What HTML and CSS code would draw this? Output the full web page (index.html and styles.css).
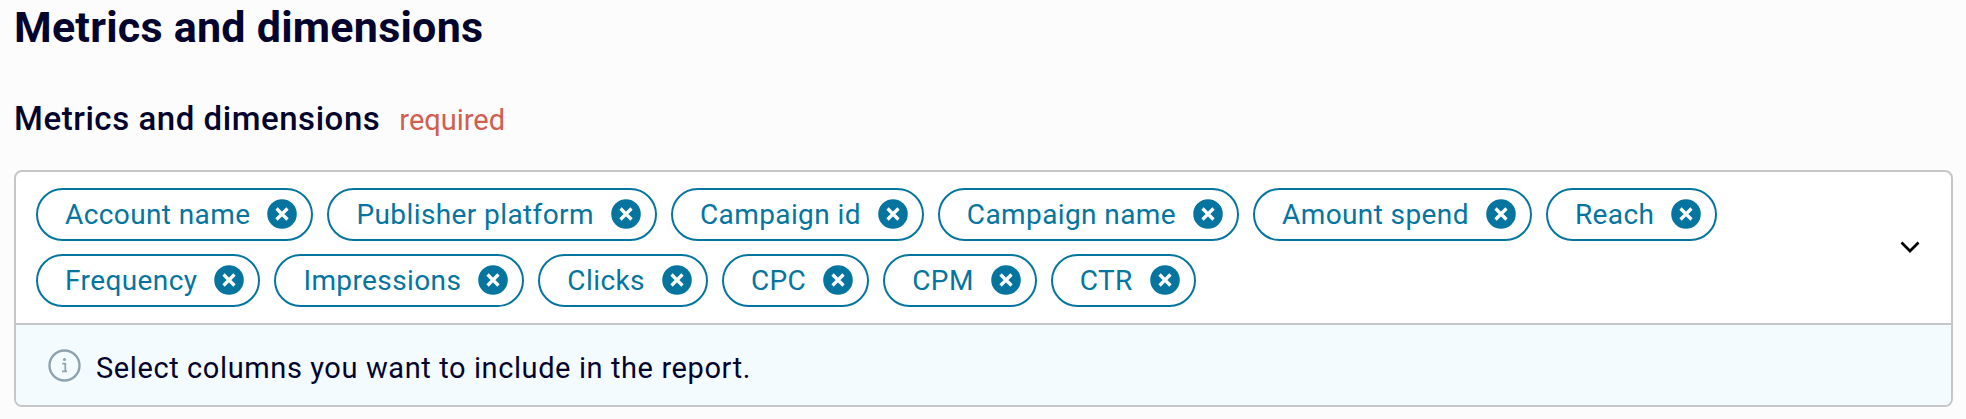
FILE: index.html
```html
<!DOCTYPE html>
<html lang="en">
<head>
<meta charset="utf-8">
<title>Metrics and dimensions</title>
<link rel="stylesheet" href="styles.css">
</head>
<body>
<svg class="defs" width="0" height="0" aria-hidden="true">
  <symbol id="x" viewBox="0 0 30 30">
    <circle cx="15" cy="15" r="14.8" fill="#05759f"/>
    <path d="M9.5 9.5L20.5 20.5M20.5 9.5L9.5 20.5" fill="none" stroke="#fff" stroke-width="3.2"/>
  </symbol>
</svg>
<main class="page">
  <h1 class="title">Metrics and dimensions</h1>
  <div class="label-row">
    <span class="label">Metrics and dimensions</span>
    <span class="required">required</span>
  </div>
  <section class="box">
    <div class="select">
      <div class="chips">
        <span class="chip">Account name<svg class="chip-x"><use href="#x"/></svg></span>
        <span class="chip">Publisher platform<svg class="chip-x"><use href="#x"/></svg></span>
        <span class="chip">Campaign id<svg class="chip-x"><use href="#x"/></svg></span>
        <span class="chip">Campaign name<svg class="chip-x"><use href="#x"/></svg></span>
        <span class="chip">Amount spend<svg class="chip-x"><use href="#x"/></svg></span>
        <span class="chip">Reach<svg class="chip-x"><use href="#x"/></svg></span>
        <span class="chip">Frequency<svg class="chip-x"><use href="#x"/></svg></span>
        <span class="chip">Impressions<svg class="chip-x"><use href="#x"/></svg></span>
        <span class="chip">Clicks<svg class="chip-x"><use href="#x"/></svg></span>
        <span class="chip">CPC<svg class="chip-x"><use href="#x"/></svg></span>
        <span class="chip">CPM<svg class="chip-x"><use href="#x"/></svg></span>
        <span class="chip">CTR<svg class="chip-x"><use href="#x"/></svg></span>
      </div>
      <svg class="chevron" viewBox="0 0 20 12"><path d="M1.5 1.5L10 10L18.5 1.5" fill="none" stroke="#000" stroke-width="2.7"/></svg>
    </div>
    <div class="hint">
      <svg class="info" viewBox="0 0 33 33">
        <circle cx="16.5" cy="16.5" r="15" fill="none" stroke="#8ea3ae" stroke-width="2.4"/>
        <circle cx="16.5" cy="10.5" r="1.5" fill="#8ea3ae"/>
        <path d="M14.3 14.6h3v7.6M14 22.4h5" fill="none" stroke="#8ea3ae" stroke-width="1.7"/>
      </svg>
      <span class="hint-text">Select columns you want to include in the report.</span>
    </div>
  </section>
</main>
</body>
</html>
```
FILE: styles.css
```css
* { box-sizing: border-box; }
html, body { margin: 0; padding: 0; }
body {
  background: #fcfcfc;
  font-family: Roboto, "Liberation Sans", sans-serif;
  width: 1966px;
  height: 419px;
  overflow: hidden;
}
.defs { position: absolute; }
.page { padding: 0 13px 0 14px; }
.title {
  margin: 0;
  padding-top: 4px;
  font-size: 43px;
  line-height: 47px;
  font-weight: 700;
  color: #03032e;
  letter-spacing: 0.25px;
}
.label-row {
  display: flex;
  align-items: baseline;
  gap: 19px;
  margin-top: 48px;
  height: 40px;
}
.label {
  font-size: 33px;
  line-height: 40px;
  font-weight: 500;
  color: #03032e;
  letter-spacing: 0.55px;
}
.required {
  font-size: 29px;
  color: #cf5f50;
}
.box {
  margin-top: 31px;
  border: 2px solid #c4c6c7;
  border-radius: 8px;
  height: 237px;
  background: #fff;
  overflow: hidden;
}
.select {
  display: flex;
  align-items: center;
  justify-content: space-between;
  height: 153px;
  padding: 16px 31px 17px 20px;
  border-bottom: 2px solid #c4c6c7;
}
.chips {
  display: flex;
  flex-wrap: wrap;
  gap: 13px 14px;
  flex: 1;
}
.chip {
  display: inline-flex;
  align-items: center;
  gap: 17px;
  height: 53px;
  padding: 0 14px 0 27px;
  border: 2px solid #05759f;
  border-radius: 27px;
  font-size: 28px;
  letter-spacing: 0.4px;
  color: #05759f;
  white-space: nowrap;
}
.chip-x { width: 30px; height: 30px; flex: none; }
.chevron { width: 20px; height: 12px; flex: none; }
.hint {
  display: flex;
  align-items: center;
  gap: 15px;
  height: 80px;
  padding: 1px 0 0 32px;
  background: #f3fbff;
}
.info { width: 33px; height: 33px; flex: none; }
.hint-text {
  padding-top: 4px;
  font-size: 29px;
  letter-spacing: 0.6px;
  color: #03032e;
}
```
